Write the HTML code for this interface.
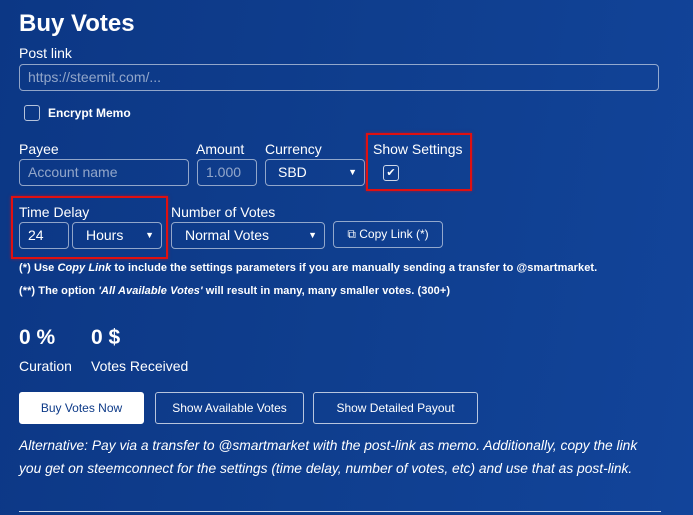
<!DOCTYPE html>
<html><head><meta charset="utf-8"><style>
*{box-sizing:border-box;margin:0;padding:0}
body{width:693px;height:515px;overflow:hidden;background:linear-gradient(100deg,#0c3785 0%,#0f3e8e 50%,#12449a 100%);font-family:"Liberation Sans",Arial,sans-serif;color:#fff;position:relative}
.a{position:absolute;white-space:nowrap}
.inp{position:absolute;border:1px solid rgba(255,255,255,.55);border-radius:4px;height:27px;font-size:14px;line-height:25px;padding-left:8px;color:#fff}
.ph{color:rgba(255,255,255,.55)}
.sel:after{content:"▼";position:absolute;right:7px;top:0;font-size:9px}
.lbl{font-size:14px}
.btn{position:absolute;border:1px solid rgba(255,255,255,.7);border-radius:3px;height:32px;font-size:12px;line-height:30px;text-align:center;color:#fff}
.red{position:absolute;border:2px solid #e01010;box-shadow:0 0 3px rgba(255,0,0,.5)}
</style></head><body>
<div class="a" style="left:19px;top:10px;font-size:24px;font-weight:bold">Buy Votes</div>
<div class="a lbl" style="left:19px;top:45px">Post link</div>
<div class="inp ph" style="left:19px;top:64px;width:640px">https://steemit.com/...</div>
<div class="a" style="left:24px;top:105px;width:16px;height:16px;border:1px solid rgba(255,255,255,.7);border-radius:3px"></div>
<div class="a" style="left:48px;top:106px;font-size:12px;font-weight:bold">Encrypt Memo</div>

<div class="a lbl" style="left:19px;top:141px">Payee</div>
<div class="inp ph" style="left:19px;top:159px;width:170px">Account name</div>
<div class="a lbl" style="left:196px;top:141px">Amount</div>
<div class="inp ph" style="left:197px;top:159px;width:60px">1.000</div>
<div class="a lbl" style="left:265px;top:141px">Currency</div>
<div class="inp sel" style="left:265px;top:159px;width:100px;padding-left:12px">SBD</div>
<div class="red" style="left:366px;top:133px;width:106px;height:58px"></div>
<div class="a lbl" style="left:373px;top:141px">Show Settings</div>
<div class="a" style="left:383px;top:165px;width:16px;height:16px;border:1px solid rgba(255,255,255,.8);border-radius:3px;font-size:11px;line-height:14px;text-align:center">✔</div>

<div class="red" style="left:11px;top:196px;width:157px;height:63px"></div>
<div class="a lbl" style="left:19px;top:204px">Time Delay</div>
<div class="inp" style="left:19px;top:222px;width:50px">24</div>
<div class="inp sel" style="left:72px;top:222px;width:90px;padding-left:13px">Hours</div>
<div class="a lbl" style="left:171px;top:204px">Number of Votes</div>
<div class="inp sel" style="left:171px;top:222px;width:154px;padding-left:13px">Normal Votes</div>
<div class="btn" style="left:333px;top:221px;width:110px;height:27px;line-height:25px;border-radius:4px;border-color:rgba(255,255,255,.55)">⧉ Copy Link (*)</div>

<div class="a" style="left:19px;top:262px;font-size:11px;font-weight:bold;letter-spacing:0.07px">(*) Use <i>Copy Link</i> to include the settings parameters if you are manually sending a transfer to @smartmarket.</div>
<div class="a" style="left:19px;top:285px;font-size:11px;font-weight:bold;letter-spacing:0.07px">(**) The option <i>'All Available Votes'</i> will result in many, many smaller votes. (300+)</div>

<div class="a" style="left:19px;top:326px;font-size:21px;font-weight:bold">0 %</div>
<div class="a" style="left:91px;top:326px;font-size:21px;font-weight:bold">0 $</div>
<div class="a lbl" style="left:19px;top:358px">Curation</div>
<div class="a lbl" style="left:91px;top:358px">Votes Received</div>

<div class="btn" style="left:19px;top:392px;width:125px;background:#fff;color:#0d3a88;border-color:#fff">Buy Votes Now</div>
<div class="btn" style="left:155px;top:392px;width:149px">Show Available Votes</div>
<div class="btn" style="left:313px;top:392px;width:165px">Show Detailed Payout</div>

<div class="a" style="left:19px;top:434px;font-size:13.8px;font-style:italic;line-height:23px">Alternative: Pay via a transfer to @smartmarket with the post-link as memo. Additionally, copy the link<br>you get on steemconnect for the settings (time delay, number of votes, etc) and use that as post-link.</div>
<div class="a" style="left:19px;top:511px;width:642px;height:1px;background:rgba(255,255,255,.8)"></div>
</body></html>
